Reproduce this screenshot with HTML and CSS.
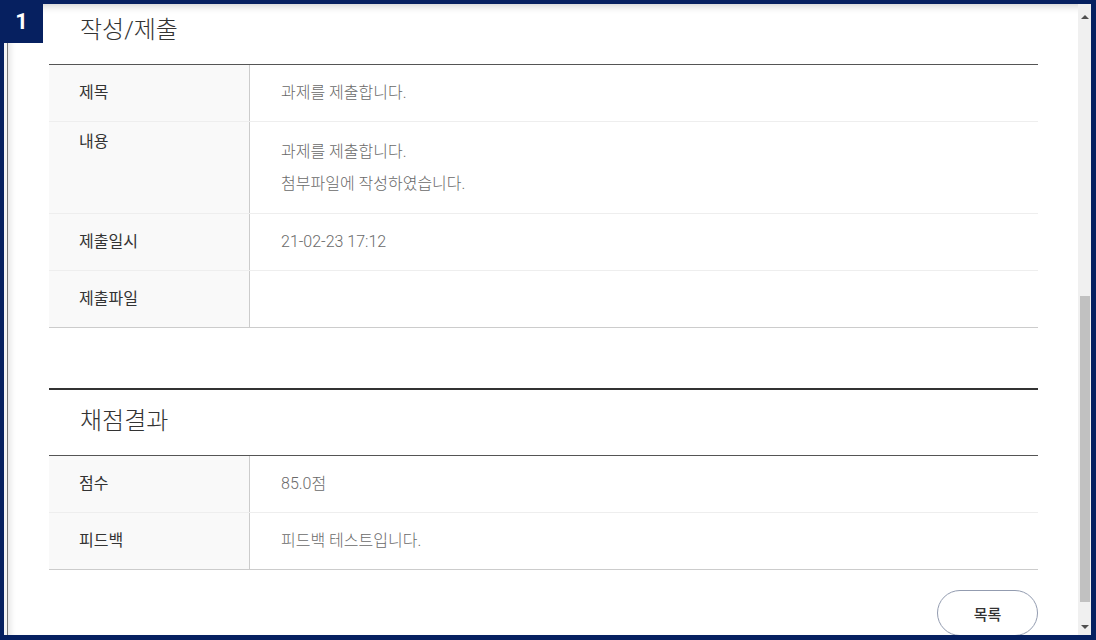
FILE: index.html
```html
<!DOCTYPE html>
<html lang="ko">
<head>
    <meta charset="UTF-8">
    <meta name="viewport" content="width=device-width, initial-scale=1.0">
    <title>과제 제출 확인</title>
    <link rel="stylesheet" href="styles.css">
</head>
<body>
    <div class="frame">
        <span class="badge">1</span>

        <div class="window">
            <div class="content">
                <div class="section first">
                    <h3 class="sec-title">작성/제출</h3>
                    <div class="board">
                        <div class="row">
                            <div class="label">제목</div>
                            <div class="value">과제를 제출합니다.</div>
                        </div>
                        <div class="row">
                            <div class="label top">내용</div>
                            <div class="value multi">
                                <p>과제를 제출합니다.</p>
                                <p>첨부파일에 작성하였습니다.</p>
                            </div>
                        </div>
                        <div class="row">
                            <div class="label">제출일시</div>
                            <div class="value">21-02-23 17:12</div>
                        </div>
                        <div class="row">
                            <div class="label">제출파일</div>
                            <div class="value"></div>
                        </div>
                    </div>
                </div>

                <div class="section">
                    <h3 class="sec-title">채점결과</h3>
                    <div class="board">
                        <div class="row">
                            <div class="label">점수</div>
                            <div class="value">85.0점</div>
                        </div>
                        <div class="row">
                            <div class="label">피드백</div>
                            <div class="value">피드백 테스트입니다.</div>
                        </div>
                    </div>
                </div>

                <div class="btn-area">
                    <button class="list-button">목록</button>
                </div>
            </div>

            <div class="scrollbar">
                <div class="arrow up"><span></span></div>
                <div class="track"><div class="thumb"></div></div>
                <div class="arrow down"><span></span></div>
            </div>
        </div>
    </div>
</body>
</html>
```

FILE: styles.css
```css
body {
    margin: 0;
    font-family: Roboto, "Noto Sans CJK KR", sans-serif;
    background: #ffffff;
}

.frame {
    box-sizing: border-box;
    width: 1096px;
    height: 640px;
    border: solid #062060;
    border-width: 4px 5px 5px 4px;
    position: relative;
}

/* numero do passo, fica por cima da moldura */
.badge {
    position: absolute;
    top: -4px;
    left: -4px;
    width: 43px;
    height: 43px;
    background: #062060;
    color: #fff;
    font-family: Roboto, "Liberation Sans", sans-serif;
    font-weight: bold;
    font-size: 22px;
    display: flex;
    align-items: center;
    justify-content: center;
    z-index: 2;
}

.window {
    display: flex;
    height: 100%;
    overflow: hidden;
    box-shadow: inset 3px 0 0 #f4f4f4, inset 4px 0 0 #7a7a7a, inset 10px 0 6px -4px rgba(0, 0, 0, 0.12), inset 0 9px 7px -6px rgba(0, 0, 0, 0.16);
}

.content {
    flex: 1;
    padding: 0 40px 0 45px;
    overflow: hidden;
}

.section {
    border-top: 2px solid #333;
    margin-top: 60px;
}

.section.first {
    margin-top: -7px;
}

.sec-title {
    margin: 0;
    padding: 15px 31px 18px;
    font-size: 24px;
    line-height: 32px;
    font-weight: 300;
    color: #333;
}

.board {
    border-top: 1px solid #555;
}

.row {
    display: grid;
    grid-template-columns: 201px 1fr;
    border-bottom: 1px solid #eeeeee;
    font-size: 16px;
    line-height: 20px;
}

.row:last-child {
    border-bottom-color: #cccccc;
}

.label {
    box-sizing: border-box;
    background: #f9f9f9;
    border-right: 1px solid #cccccc;
    padding: 18px 30px;
    color: #333;
    font-weight: 400;
}

.label.top {
    padding-top: 10px;
}

.value {
    padding: 18px 31px;
    color: #6a6a6a;
    font-weight: 300;
}

.value.multi {
    padding: 20px 31px 19px;
}

.value p {
    margin: 0;
}

.value p + p {
    margin-top: 12px;
}

.btn-area {
    display: flex;
    justify-content: flex-end;
    padding-top: 20px;
}

.list-button {
    width: 101px;
    height: 46px;
    border: 1px solid #939cb0;
    border-radius: 23px;
    background: #fff;
    font-family: Roboto, "Noto Sans CJK KR", sans-serif;
    font-size: 15px;
    font-weight: 500;
    color: #333;
    cursor: pointer;
}

.scrollbar {
    width: 13px;
    background: #f0f0f0;
    display: flex;
    flex-direction: column;
}

.arrow {
    display: flex;
    align-items: center;
    justify-content: center;
}

.arrow.up {
    height: 26px;
}

.arrow.down {
    height: 17px;
}

.arrow span {
    width: 0;
    height: 0;
    border-left: 4px solid transparent;
    border-right: 4px solid transparent;
}

.arrow.up span {
    border-bottom: 4px solid #505050;
}

.arrow.down span {
    border-top: 4px solid #505050;
}

.track {
    flex: 1;
}

.thumb {
    width: 10px;
    height: 306px;
    margin: 266px 0 0 2px;
    background: #c1c1c1;
}
```
